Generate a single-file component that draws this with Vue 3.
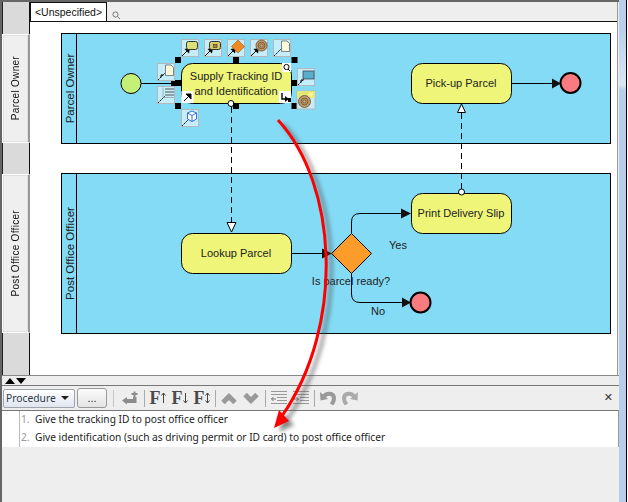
<script setup>
const actionIcons = [
  { x: 181, y: 39, type: 'task', head: true },
  { x: 204, y: 39, type: 'sub', head: true },
  { x: 227, y: 39, type: 'diamond', head: true },
  { x: 250, y: 39, type: 'event', head: true },
  { x: 273, y: 39, type: 'note', head: false },
  { x: 157, y: 63, type: 'note', head: false, small: true },
  { x: 157, y: 86, type: 'comment', head: false },
  { x: 181, y: 109, type: 'cube', head: false },
  { x: 297, y: 68, type: 'pool', head: false, small: true }
]

const handles = [
  [178, 60], [236, 60], [294.5, 60],
  [294.5, 83],
  [178, 106], [236, 106], [294.5, 106]
]
</script>

<template>
  <div class="app">
    <div class="main">
      <div class="top-line"></div>
      <div class="upper">
        <aside class="side">
          <div class="side-gap first"></div>
          <div class="side-tab owner"><span>Parcel Owner</span></div>
          <div class="side-gap middle"></div>
          <div class="side-tab officer"><span>Post Office Officer</span></div>
          <div class="side-gap last"></div>
        </aside>
        <div class="editor">
          <div class="tabbar">
            <div class="tab">&lt;Unspecified&gt;</div>
            <svg class="search" width="9" height="9" viewBox="0 0 9 9">
              <circle cx="3.5" cy="3.5" r="2.6" fill="none" stroke="#777" />
              <path d="M5.5 5.5 8 8" stroke="#777" />
            </svg>
          </div>
          <div class="canvas">
            <svg class="diagram" width="587" height="353" viewBox="30 22 587 353">
              <rect x="30" y="22" width="587" height="353" fill="#fff" />
              <g fill="#84dbf6" stroke="#000">
                <rect x="61.5" y="33.5" width="549" height="110" />
                <rect x="61.5" y="173.5" width="549" height="160" />
              </g>
              <path d="M76.5 33.5V143.5M76.5 173.5V333.5" stroke="#000" fill="none" />
              <text class="label pool-label" transform="translate(74 88.5) rotate(-90)">Parcel Owner</text>
              <text class="label pool-label" transform="translate(74 253.5) rotate(-90)">Post Office Officer</text>

              <!-- flows -->
              <g stroke="#000" fill="none">
                <path d="M141 83.5H181" />
                <path d="M511.5 83.5H553" />
                <path d="M291.5 253.5H324" />
                <path d="M351.5 233V222Q351.5 213.5 360 213.5H404" />
                <path d="M351.5 273V294Q351.5 302.5 360 302.5H403" />
                <path d="M231.5 107V222" stroke-dasharray="6 4" />
                <path d="M461.5 113V189" stroke-dasharray="6 4" />
              </g>
              <g fill="#111">
                <path d="M552 78.5 561 83.5 552 88.5Z" />
                <path d="M322 248.5 332 253.5 322 258.5Z" />
                <path d="M401 208.5 411 213.5 401 218.5Z" />
                <path d="M402 297.5 411 302.5 402 307.5Z" />
              </g>
              <path d="M227 222.5H236L231.5 232Z" fill="#fff" stroke="#000" />
              <path d="M457.5 112.5H465.5L461.5 104Z" fill="#fff" stroke="#000" />

              <!-- nodes -->
              <circle cx="131" cy="83.5" r="10" fill="#c5f078" stroke="#000" />
              <g fill="#eef578" stroke="#000">
                <rect x="181.5" y="63.5" width="110" height="40" rx="11" />
                <rect x="411.5" y="63.5" width="100" height="40" rx="11" />
                <rect x="181.5" y="233.5" width="110" height="40" rx="11" />
                <rect x="411.5" y="193.5" width="100" height="40" rx="11" />
              </g>
              <path d="M351.5 233.5 371.5 253.5 351.5 273.5 331.5 253.5Z" fill="#fd9b2b" stroke="#000" />
              <g fill="#f97b80" stroke="#000" stroke-width="2">
                <circle cx="570.5" cy="83" r="10" />
                <circle cx="420.5" cy="302.5" r="10" />
              </g>
              <circle cx="231" cy="103.5" r="3" fill="#fff" stroke="#000" />
              <circle cx="461.5" cy="192" r="3" fill="#fff" stroke="#000" />

              <g class="label" text-anchor="middle">
                <text x="236" y="80">Supply Tracking ID</text>
                <text x="236" y="95">and Identification</text>
                <text x="461" y="87">Pick-up Parcel</text>
                <text x="236" y="257">Lookup Parcel</text>
                <text x="461" y="217">Print Delivery Slip</text>
                <text x="351" y="285">Is parcel ready?</text>
                <text x="398" y="249">Yes</text>
                <text x="378" y="315">No</text>
              </g>

              <!-- selection handles -->
              <rect v-for="h in handles" :key="h.join()" :x="h[0] - 3" :y="h[1] - 3" width="6" height="6" fill="#000" />
              <rect x="171" y="80" width="11" height="6" fill="#000" />

              <!-- corner buttons on the selected task -->
              <rect x="282" y="63" width="9" height="9" fill="#fff" />
              <circle cx="286.5" cy="67" r="2.6" fill="none" stroke="#000" />
              <path d="M288 69 290 71" stroke="#000" />
              <rect x="181.5" y="91" width="12" height="12" fill="#fff" />
              <path d="M184 101 190 95M186 94H191V99Z" stroke="#000" fill="#000" />
              <rect x="279" y="91" width="12" height="12" fill="#fff" />
              <path d="M282 93V99H286" stroke="#000" fill="none" stroke-width="1.4" />
              <path d="M285 96 289 99 285 102Z" fill="#000" />
              <rect x="288" y="98" width="3" height="4" fill="#000" />

              <!-- resource icons around the selected task -->
              <g v-for="i in actionIcons" :key="i.x + '-' + i.y" :transform="`translate(${i.x} ${i.y})`">
                <rect x="0.5" y="0.5" width="17" height="17" fill="#c6eefa" stroke="#b4b8ba" />
                <path d="M1 17 8 10" stroke="#000" :stroke-dasharray="i.head ? '' : '2 1'" />
                <path v-if="i.head" d="M3.5 10 9 9 8 14.5Z" fill="#000" />
                <path v-if="i.small" d="M4 12V14.5M4 12H6.5" stroke="#000" fill="none" />
                <rect v-if="i.type === 'task'" x="5.5" y="2.5" width="11" height="8" rx="2" fill="#dbe078" stroke="#333" />
                <g v-if="i.type === 'sub'">
                  <rect x="5.5" y="2.5" width="11" height="8" rx="2" fill="#dcc868" stroke="#333" />
                  <rect x="9.5" y="5.5" width="3.5" height="3" fill="#a58a3a" stroke="#333" stroke-width="0.6" />
                </g>
                <path v-if="i.type === 'diamond'" d="M11 1 17.5 7.5 11 14 4.5 7.5Z" fill="#f08b24" stroke="#8a5a20" stroke-width="0.6" />
                <g v-if="i.type === 'event'" fill="none" stroke="#7a6040">
                  <circle cx="11.5" cy="6.5" r="5.5" fill="#c09a6a" />
                  <circle cx="11.5" cy="6.5" r="3.4" />
                  <circle cx="11.5" cy="6.5" r="1.6" fill="#d8b078" />
                </g>
                <path v-if="i.type === 'note'" d="M8.5 2H14L16.5 4.5V12.5H8.5Z" fill="#fbf8dc" stroke="#555" stroke-width="0.7" />
                <g v-if="i.type === 'comment'">
                  <path d="M8 3H17M8 6H17M8 9H17" stroke="#555" />
                  <path d="M6 1.5V11.5H17" stroke="#888" fill="none" stroke-width="0.6" />
                </g>
                <g v-if="i.type === 'cube'">
                  <path d="M6.5 4 11 2 15.5 4V10L11 12.5 6.5 10Z" fill="#fff" stroke="#2a6ee0" />
                  <path d="M6.5 4 11 6.5 15.5 4M11 6.5V12.5" fill="none" stroke="#2a6ee0" />
                </g>
                <rect v-if="i.type === 'pool'" x="6" y="3" width="11" height="8" fill="#58aecb" stroke="#445" stroke-width="0.8" />
              </g>
              <g transform="translate(297 91)">
                <rect x="0" y="0" width="18" height="18" fill="#c6eefa" stroke="#b4b8ba" />
                <rect x="0" y="0" width="18" height="7" fill="#e6e875" />
                <circle cx="7.5" cy="10.5" r="6" fill="#c09a6a" stroke="#7a6040" />
                <circle cx="7.5" cy="10.5" r="3.4" fill="none" stroke="#7a6040" />
                <circle cx="7.5" cy="10.5" r="1.6" fill="#d8b078" stroke="#7a6040" />
                <path d="M14 1V6M11.5 3.5H16.5M12 1.5 16 5.5M16 1.5 12 5.5" stroke="#fff7a8" />
              </g>
            </svg>
          </div>
        </div>
      </div>

      <div class="lower">
        <div class="split-row">
          <span class="tri up"></span>
          <span class="tri down"></span>
        </div>
        <div class="toolbar">
          <div class="combo">
            <span>Procedure</span>
            <i class="combo-arrow"></i>
          </div>
          <button class="more">...</button>
          <i class="sep first-sep"></i>
          <svg class="tool" width="16" height="14" viewBox="0 0 16 14">
            <path d="M0 9.5 5 6V8H11V6H14.5V12H5V13.5Z" fill="#8c8c8c" />
            <path d="M12.5 0.5V6M9.5 3H15.5" stroke="#8c8c8c" stroke-width="2" />
          </svg>
          <i class="sep"></i>
          <span class="font-btn"><b>F</b><svg width="5" height="12" viewBox="0 0 5 12"><path d="M2.5 1V11M0.5 3.5 2.5 1 4.5 3.5" stroke="#444" fill="none" /></svg></span>
          <span class="font-btn"><b>F</b><svg width="5" height="12" viewBox="0 0 5 12"><path d="M2.5 1V11M0.5 8.5 2.5 11 4.5 8.5" stroke="#444" fill="none" /></svg></span>
          <span class="font-btn"><b>F</b><svg width="5" height="12" viewBox="0 0 5 12"><path d="M2.5 1V11M0.5 3.5 2.5 1 4.5 3.5M0.5 8.5 2.5 11 4.5 8.5" stroke="#444" fill="none" /></svg></span>
          <i class="sep"></i>
          <svg class="tool" width="16" height="11" viewBox="0 0 16 11">
            <path d="M2 9.5 8 3.5 14 9.5" fill="none" stroke="#999" stroke-width="5" />
          </svg>
          <svg class="tool" width="16" height="11" viewBox="0 0 16 11">
            <path d="M2 1.5 8 7.5 14 1.5" fill="none" stroke="#999" stroke-width="5" />
          </svg>
          <i class="sep"></i>
          <svg class="tool" width="16" height="16" viewBox="0 0 16 16">
            <path d="M0 1.5H16M0 4.5H16M6 7.5H16M6 10.5H16M0 13.5H16" stroke="#999" />
            <path d="M0.5 9H5M2.5 7 0.5 9 2.5 11" stroke="#777" fill="none" />
          </svg>
          <svg class="tool" width="16" height="16" viewBox="0 0 16 16">
            <path d="M0 1.5H16M0 4.5H16M7 7.5H16M7 10.5H16M0 13.5H16" stroke="#999" />
            <path d="M0 9H5.5M3.5 7 5.5 9 3.5 11" stroke="#777" fill="none" />
          </svg>
          <i class="sep"></i>
          <svg class="tool" width="16" height="14" viewBox="0 0 16 14">
            <path d="M3 6.5C6 1 14 1.5 14 7.5 14 10 13 11.5 11.5 13.5" fill="none" stroke="#999" stroke-width="4" />
            <path d="M0 1 0.5 9.5 8 8Z" fill="#999" />
          </svg>
          <svg class="tool" width="16" height="14" viewBox="0 0 16 14">
            <path d="M13 6.5C10 1 2 1.5 2 7.5 2 10 3 11.5 4.5 13.5" fill="none" stroke="#aaa" stroke-width="4" />
            <path d="M16 1 15.5 9.5 8 8Z" fill="#aaa" />
          </svg>
          <span class="close">✕</span>
        </div>
        <div class="steps">
          <div class="step"><span class="num">1.</span><span class="step-text">Give the tracking ID to post office officer</span></div>
          <div class="step"><span class="num">2.</span><span class="step-text">Give identification (such as driving permit or ID card) to post office officer</span></div>
        </div>
      </div>
    </div>
    <div class="edge"></div>

    <!-- red annotation arrow lying over everything -->
    <svg class="annotation" width="628" height="502" viewBox="0 0 628 502">
      <defs>
        <filter id="soft" x="-30%" y="-30%" width="160%" height="160%">
          <feGaussianBlur stdDeviation="2" />
        </filter>
      </defs>
      <g filter="url(#soft)" opacity="0.7" transform="translate(5 4)">
        <path d="M278 120C338 185 345 325 282 416" fill="none" stroke="#555" stroke-width="3" />
        <path d="M274 428 279 410 289 421Z" fill="#555" />
      </g>
      <path d="M278 120C338 185 345 325 282 416" fill="none" stroke="#f00" stroke-width="3" />
      <path d="M274 428 279 410 289 421Z" fill="#f00" />
    </svg>
  </div>
</template>

<style scoped>
.app {
  position: relative;
  display: flex;
  width: 628px;
  height: 502px;
  overflow: hidden;
  background: #fff;
  font-family: "Liberation Sans", Arial, sans-serif;
}

.main {
  width: 619px;
  height: 502px;
  flex: none;
  background: #eee;
  border-left: 2px solid #666;
  box-sizing: border-box;
}

.top-line {
  height: 2px;
  background: #666;
}

.upper {
  display: flex;
  height: 373px;
  border-bottom: 1px solid #888;
}

.side {
  display: flex;
  flex-direction: column;
  width: 28px;
  flex: none;
}

.side-gap {
  background: #dadada;
  border-left: 1px solid #222;
  border-right: 1px solid #111;
}

.side-gap.first { height: 32px; }
.side-gap.middle { height: 31px; }
.side-gap.last { flex: 1; }

.side-tab {
  display: flex;
  align-items: center;
  justify-content: center;
  background: #efefef;
  border: 1px solid #fff;
  border-right: 2px solid #999;
  box-sizing: border-box;
  box-shadow: inset 0 0 0 1px #e0e0e0;
}

.side-tab.owner { height: 109px; }
.side-tab.officer { height: 159px; }

.side-tab span {
  writing-mode: vertical-rl;
  transform: rotate(180deg);
  font-size: 10px;
  letter-spacing: 0.3px;
  color: #111;
  white-space: nowrap;
}

.editor {
  display: flex;
  flex-direction: column;
  width: 587px;
  flex: none;
  border-right: 1px solid #999;
}

.tabbar {
  display: flex;
  align-items: flex-end;
  height: 20px;
  flex: none;
  background: #eee;
  border-bottom: 1px solid #111;
  box-sizing: border-box;
}

.tab {
  width: 77px;
  height: 19px;
  line-height: 18px;
  text-align: center;
  font-size: 10.5px;
  color: #111;
  background: #fff;
  border: 1px solid #111;
  border-bottom: 0;
  box-sizing: border-box;
}

.search {
  margin: 0 0 1px 5px;
}

.canvas {
  flex: 1;
  background: #fff;
  overflow: hidden;
}

.diagram {
  display: block;
}

.label {
  font-family: "Liberation Sans", Arial, sans-serif;
  font-size: 11px;
  fill: #222;
}

.pool-label {
  text-anchor: middle;
  font-size: 11.5px;
}

.edge {
  width: 7px;
  height: 502px;
  flex: none;
  background: linear-gradient(#b8d0ec 0, #b8d0ec 30px, #d8e6f5 85px, #b5cfeb 90px);
  border-right: 1px solid #000;
}

.lower {
  display: flex;
  flex-direction: column;
  height: 126px;
}

.split-row {
  display: flex;
  align-items: center;
  gap: 1px;
  height: 9px;
  padding-left: 3px;
  border-bottom: 1px solid #777;
  flex: none;
}

.tri {
  width: 0;
  height: 0;
  border-left: 5.5px solid transparent;
  border-right: 5.5px solid transparent;
}

.tri.up { border-bottom: 6px solid #000; }
.tri.down { border-top: 6px solid #000; }

.toolbar {
  display: flex;
  align-items: center;
  height: 24px;
  flex: none;
  padding-left: 1px;
  position: relative;
}

.combo {
  display: flex;
  align-items: center;
  justify-content: space-between;
  width: 72px;
  height: 19px;
  padding: 0 5px 0 2px;
  box-sizing: border-box;
  font-family: "Noto Sans", "Liberation Sans", sans-serif;
  font-size: 10.3px;
  color: #2f3b4a;
  background: linear-gradient(#fff, #dfe6f0);
  border: 1px solid #a0a4aa;
  border-radius: 2px;
}

.combo-arrow {
  width: 0;
  height: 0;
  border-left: 4px solid transparent;
  border-right: 4px solid transparent;
  border-top: 4px solid #222;
}

.more {
  width: 30px;
  height: 20px;
  margin-left: 2px;
  padding: 0;
  font-size: 11px;
  line-height: 14px;
  color: #222;
  background: linear-gradient(#fbfbfb, #e4e4e4);
  border: 1px solid #999;
  border-radius: 3px;
}

.sep {
  width: 1px;
  height: 17px;
  margin: 0 2px 0 2.5px;
  background: #aaa;
  flex: none;
}

.first-sep {
  margin: 0 5px 0 6px;
  background: #c4c4c4;
}

.tool {
  margin: 0 3px;
  flex: none;
}

.font-btn {
  display: flex;
  align-items: center;
  width: 16px;
  margin: 0 3px;
  flex: none;
  justify-content: space-between;
}

.font-btn b {
  font-family: "Liberation Serif", serif;
  font-size: 18px;
  line-height: 17px;
  color: #4a4a4a;
}

.close {
  position: absolute;
  right: 6px;
  top: 5px;
  font-family: "DejaVu Sans", sans-serif;
  font-size: 11px;
  color: #333;
}

.steps {
  border-top: 1px solid #777;
  border-right: 1px solid #999;
  background: #fff;
  height: 36px;
  flex: none;
}

.step {
  display: flex;
  height: 18px;
  align-items: center;
  font-family: "Noto Sans", sans-serif;
  font-size: 10.2px;
  color: #222;
  white-space: nowrap;
  overflow: hidden;
}

.step-text {
  padding-bottom: 2px;
}

.num {
  width: 14px;
  margin-left: 17px;
  padding-left: 1px;
  height: 18px;
  line-height: 16px;
  flex: none;
  border-left: 1px solid #b5bcc8;
  color: #999;
}

.annotation {
  position: absolute;
  left: 0;
  top: 0;
  pointer-events: none;
}
</style>
